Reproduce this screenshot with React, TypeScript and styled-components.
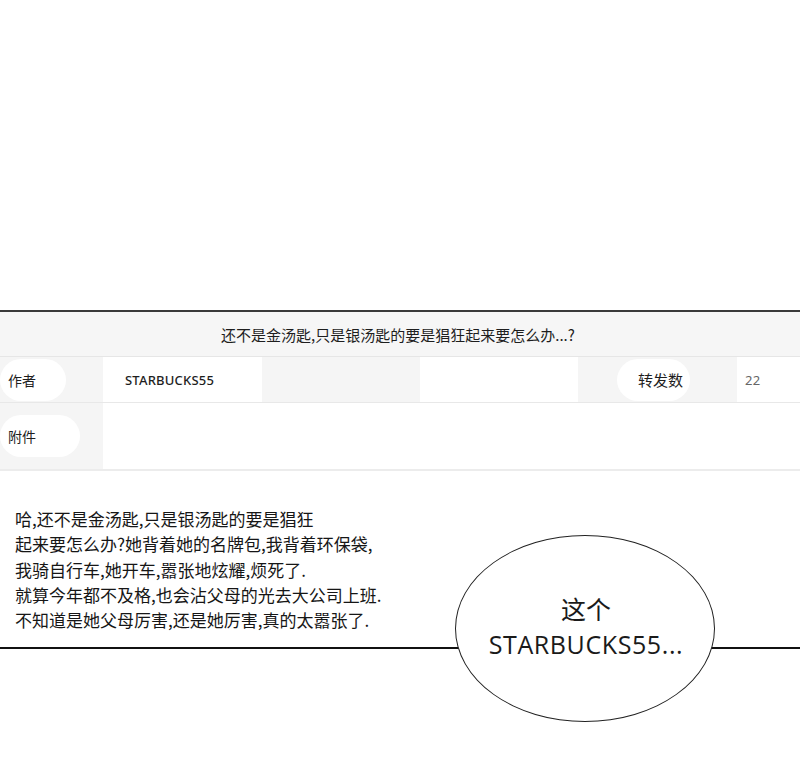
import React from "react";
import styled, { createGlobalStyle } from "styled-components";

const Global = createGlobalStyle`
  html, body { margin: 0; padding: 0; background: #fff; }
  body { font-family: "Noto Sans CJK SC", "Noto Sans", sans-serif; color: #222; }
`;

const Page = styled.div`
  width: 800px;
  height: 768px;
  background: #fff;
  overflow: hidden;
  display: flex;
  flex-direction: column;
`;

const TopSpace = styled.div`
  height: 310px;
  flex: none;
`;

const Panel = styled.div`
  border-top: 2px solid #3a3a3a;
  display: flex;
  flex-direction: column;
`;

const Header = styled.div`
  height: 44px;
  background: #f6f6f6;
  border-bottom: 1px solid #e6e6e6;
  display: flex;
  align-items: center;
  justify-content: center;
  font-size: 15px;
  color: #1e1e1e;
  padding-right: 4px;
`;

const Row = styled.div<{ $h: number }>`
  height: ${(p) => p.$h}px;
  border-bottom: 1px solid #e8e8e8;
  display: grid;
  grid-template-columns: 103px 159px 158px 158px 159px 1fr;
`;

const Row2 = styled.div`
  height: 66px;
  border-bottom: 2px solid #ececec;
  display: grid;
  grid-template-columns: 103px 1fr;
`;

const Cell = styled.div<{ $gray?: boolean; $pad?: number }>`
  background: ${(p) => (p.$gray ? "#f5f5f5" : "#fff")};
  display: flex;
  align-items: center;
  padding-left: ${(p) => p.$pad ?? 0}px;
  position: relative;
`;

const Pill = styled.div<{ $w: number; $left: number; $h: number }>`
  position: absolute;
  left: ${(p) => p.$left}px;
  width: ${(p) => p.$w}px;
  height: ${(p) => p.$h}px;
  top: 50%;
  transform: translateY(-50%);
  background: #fff;
  border-radius: 22px;
`;

const Label = styled.span<{ $size?: number }>`
  position: relative;
  font-size: ${(p) => p.$size ?? 14}px;
  color: #1e1e1e;
`;

const Value = styled.span<{ $muted?: boolean }>`
  position: relative;
  font-family: "Noto Sans", "Open Sans", sans-serif;
  font-size: 13px;
  font-weight: ${(p) => (p.$muted ? 400 : 500)};
  color: ${(p) => (p.$muted ? "#666" : "#1e1e1e")};
  letter-spacing: 0.2px;
`;

const Body = styled.div`
  padding: 35px 0 0 15px;
  height: 176px;
  box-sizing: border-box;
`;

const Line = styled.p`
  margin: 0;
  font-size: 17px;
  line-height: 25.3px;
  color: #161616;
  font-weight: 400;
  letter-spacing: 0;
`;

const Divider = styled.div`
  position: relative;
  height: 2px;
  background: #111;
`;

const Bubble = styled.div`
  position: absolute;
  left: 455px;
  top: -112px;
  width: 260px;
  height: 187px;
  box-sizing: border-box;
  border: 1.5px solid #222;
  border-radius: 50%;
  background: #fff;
  display: flex;
  flex-direction: column;
  align-items: center;
  justify-content: center;
  padding-bottom: 6px;
  padding-left: 2px;
`;

const BubbleCJK = styled.div`
  font-size: 25px;
  line-height: 37px;
  color: #1a1a1a;
  text-align: center;
`;

const BubbleLatin = styled.div`
  font-family: "Open Sans", "Noto Sans", sans-serif;
  font-size: 25px;
  line-height: 34px;
  color: #1a1a1a;
  text-align: center;
  letter-spacing: 0.6px;
`;

export default function App() {
  return (
    <Page>
      <Global />
      <TopSpace />
      <Panel>
        <Header>还不是金汤匙,只是银汤匙的要是猖狂起来要怎么办...?</Header>
        <Row $h={45}>
          <Cell $gray $pad={8}>
            <Pill $left={0} $w={66} $h={42} />
            <Label>作者</Label>
          </Cell>
          <Cell $pad={22}>
            <Value>STARBUCKS55</Value>
          </Cell>
          <Cell $gray />
          <Cell />
          <Cell $gray $pad={60}>
            <Pill $left={39} $w={73} $h={42} />
            <Label $size={15}>转发数</Label>
          </Cell>
          <Cell $pad={8}>
            <Value $muted>22</Value>
          </Cell>
        </Row>
        <Row2>
          <Cell $gray $pad={8}>
            <Pill $left={0} $w={80} $h={42} />
            <Label>附件</Label>
          </Cell>
          <Cell />
        </Row2>
        <Body>
          <Line>哈,还不是金汤匙,只是银汤匙的要是猖狂</Line>
          <Line>起来要怎么办?她背着她的名牌包,我背着环保袋,</Line>
          <Line>我骑自行车,她开车,嚣张地炫耀,烦死了.</Line>
          <Line>就算今年都不及格,也会沾父母的光去大公司上班.</Line>
          <Line>不知道是她父母厉害,还是她厉害,真的太嚣张了.</Line>
        </Body>
        <Divider>
          <Bubble>
            <BubbleCJK>这个</BubbleCJK>
            <BubbleLatin>STARBUCKS55...</BubbleLatin>
          </Bubble>
        </Divider>
      </Panel>
    </Page>
  );
}
